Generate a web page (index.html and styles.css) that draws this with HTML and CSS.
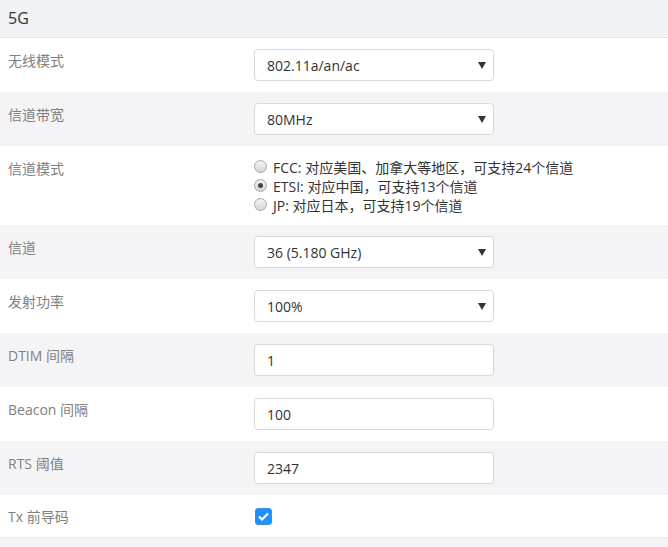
FILE: index.html
```html
<!DOCTYPE html>
<html lang="zh-CN">
<head>
  <meta charset="UTF-8" />
  <meta name="viewport" content="width=device-width, initial-scale=1.0"/>
  <title>5G</title>
  <link rel="stylesheet" href="styles.css">
</head>
<body>
  <div class="panel">
    <div class="panel-head">5G</div>

    <div class="row">
      <div class="label">无线模式</div>
      <div class="control">
        <div class="select"><span>802.11a/an/ac</span><svg class="caret" width="8" height="7" viewBox="0 0 8 7"><path d="M0 0h8L4 7z" fill="#333"/></svg></div>
      </div>
    </div>

    <div class="row alt">
      <div class="label">信道带宽</div>
      <div class="control">
        <div class="select"><span>80MHz</span><svg class="caret" width="8" height="7" viewBox="0 0 8 7"><path d="M0 0h8L4 7z" fill="#333"/></svg></div>
      </div>
    </div>

    <div class="row">
      <div class="label">信道模式</div>
      <div class="control radios">
        <label class="radio"><span class="dot"></span>FCC: 对应美国、加拿大等地区，可支持24个信道</label>
        <label class="radio on"><span class="dot"></span>ETSI: 对应中国，可支持13个信道</label>
        <label class="radio"><span class="dot"></span>JP: 对应日本，可支持19个信道</label>
      </div>
    </div>

    <div class="row alt">
      <div class="label">信道</div>
      <div class="control">
        <div class="select"><span>36 (5.180 GHz)</span><svg class="caret" width="8" height="7" viewBox="0 0 8 7"><path d="M0 0h8L4 7z" fill="#333"/></svg></div>
      </div>
    </div>

    <div class="row">
      <div class="label">发射功率</div>
      <div class="control">
        <div class="select"><span>100%</span><svg class="caret" width="8" height="7" viewBox="0 0 8 7"><path d="M0 0h8L4 7z" fill="#333"/></svg></div>
      </div>
    </div>

    <div class="row alt">
      <div class="label">DTIM 间隔</div>
      <div class="control"><input class="text" type="text" value="1"></div>
    </div>

    <div class="row">
      <div class="label">Beacon 间隔</div>
      <div class="control"><input class="text" type="text" value="100"></div>
    </div>

    <div class="row alt">
      <div class="label">RTS 阈值</div>
      <div class="control"><input class="text" type="text" value="2347"></div>
    </div>

    <div class="row last">
      <div class="label">Tx 前导码</div>
      <div class="control">
        <span class="check"><svg width="11" height="9" viewBox="0 0 11 9"><path d="M1 4.5l3 3L10 1.5" fill="none" stroke="#fff" stroke-width="2.2"/></svg></span>
      </div>
    </div>
  </div>
</body>
</html>
```

FILE: styles.css
```css
body {
  margin: 0;
  font-family: "Open Sans", "Noto Sans CJK SC", sans-serif;
  font-size: 14px;
  color: #333;
  background: #f4f4f6;
}

.panel {
  background: #f4f4f6;
}

.panel-head {
  height: 37px;
  line-height: 36px;
  padding-left: 8px;
  font-size: 16px;
  color: #333;
  background: #f0f2f5;
  border-bottom: 1px solid #e4e6ea;
}

.row {
  display: flex;
  padding: 11px 0;
  background: #fff;
}

.row.alt {
  background: #f4f4f6;
}

.row.last {
  padding: 9px 0;
  border-bottom: 1px solid #e8e8ea;
}

.label {
  width: 246px;
  padding-left: 8px;
  line-height: 24px;
  color: #808080;
  flex-shrink: 0;
}

.row.last .label {
  padding-top: 1px;
  line-height: 23px;
}

.select {
  width: 240px;
  height: 32px;
  box-sizing: border-box;
  border: 1px solid #d9d9d9;
  border-radius: 4px;
  background: #fff;
  padding: 0 6px 0 12px;
  display: flex;
  align-items: center;
  justify-content: space-between;
  color: #333;
}

.caret {
  margin-right: 1px;
}

.text {
  display: block;
  width: 240px;
  height: 32px;
  box-sizing: border-box;
  border: 1px solid #d9d9d9;
  border-radius: 4px;
  background: #fff;
  padding: 0 12px;
  font-family: inherit;
  font-size: 14px;
  color: #333;
  margin: 0;
  outline: none;
}

.radios {
  display: flex;
  flex-direction: column;
}

.radio {
  display: flex;
  align-items: center;
  height: 19px;
  color: #333;
}

.dot {
  width: 11px;
  height: 11px;
  border: 1px solid #a9a9a9;
  border-radius: 50%;
  background: linear-gradient(#f2f2f2, #d6d6d6);
  margin-right: 6px;
  position: relative;
}

.radio.on .dot::after {
  content: "";
  position: absolute;
  left: 3px;
  top: 3px;
  width: 5px;
  height: 5px;
  border-radius: 50%;
  background: #444;
}

.check {
  display: flex;
  align-items: center;
  justify-content: center;
  width: 17px;
  height: 17px;
  margin-top: 4px;
  margin-left: 1px;
  box-sizing: border-box;
  border-radius: 3px;
  background: #1e90ff;
  border: 1px solid #3d8fe0;
}
```
